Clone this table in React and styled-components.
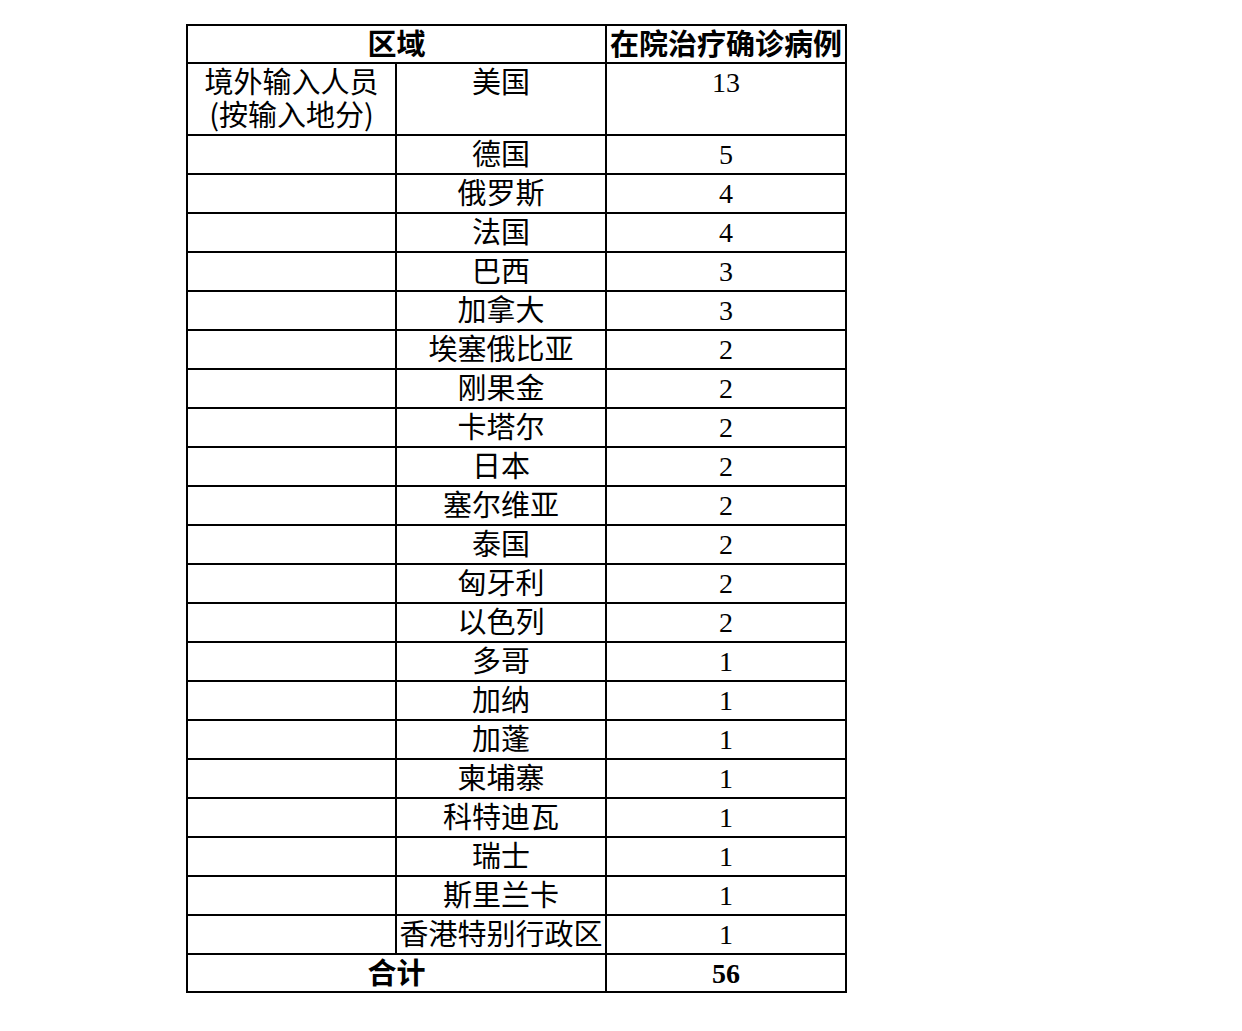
import React from 'react'
import styled, { createGlobalStyle } from 'styled-components'

const GlobalStyle = createGlobalStyle`
  html, body {
    margin: 0;
    padding: 0;
    background: #fff;
  }
`

const Page = styled.div`
  padding: 24px 0 0 186px;
`

const Sheet = styled.div`
  display: grid;
  grid-template-columns: 207px 208px 238px;
  grid-template-rows: 36px 70px repeat(21, 37px) 36px;
  gap: 2px;
  padding: 2px;
  width: max-content;
  background: #000;
`

const Cell = styled.div`
  grid-column: ${props => props.span ? `span ${props.span}` : 'auto'};
  background: #fff;
  color: #000;
  text-align: center;
  white-space: nowrap;
  font-family: ${props => props.num
    ? '"Liberation Serif", "Times New Roman", serif'
    : '"Noto Sans CJK SC", "Noto Sans", sans-serif'};
  font-size: ${props => props.num ? '28px' : '29px'};
  font-weight: ${props => props.bold ? 700 : 400};
  line-height: ${props => props.num ? '37px' : '33px'};
`

const rows = [
  ['德国', 5],
  ['俄罗斯', 4],
  ['法国', 4],
  ['巴西', 3],
  ['加拿大', 3],
  ['埃塞俄比亚', 2],
  ['刚果金', 2],
  ['卡塔尔', 2],
  ['日本', 2],
  ['塞尔维亚', 2],
  ['泰国', 2],
  ['匈牙利', 2],
  ['以色列', 2],
  ['多哥', 1],
  ['加纳', 1],
  ['加蓬', 1],
  ['柬埔寨', 1],
  ['科特迪瓦', 1],
  ['瑞士', 1],
  ['斯里兰卡', 1],
  ['香港特别行政区', 1],
]

export default function App() {
  return (
    <>
      <GlobalStyle />
      <Page>
        <Sheet>
          <Cell span={2} bold>区域</Cell>
          <Cell bold>在院治疗确诊病例</Cell>

          <Cell>境外输入人员<br />(按输入地分)</Cell>
          <Cell>美国</Cell>
          <Cell num>13</Cell>

          {rows.map(([name, count]) => (
            <React.Fragment key={name}>
              <Cell />
              <Cell>{name}</Cell>
              <Cell num>{count}</Cell>
            </React.Fragment>
          ))}

          <Cell span={2} bold>合计</Cell>
          <Cell num bold>56</Cell>
        </Sheet>
      </Page>
    </>
  )
}
